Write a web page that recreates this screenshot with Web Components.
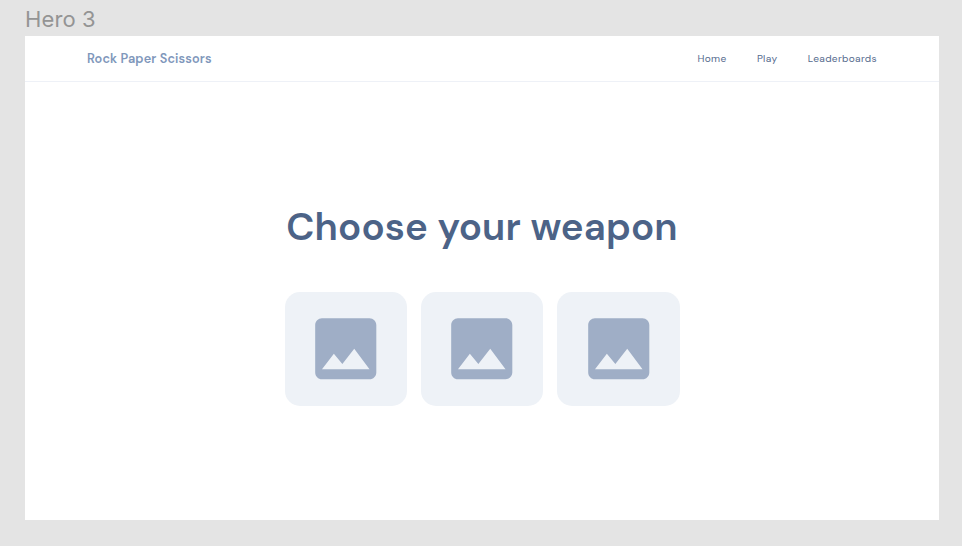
<!DOCTYPE html>
<html lang="en">
<head>
<meta charset="utf-8">
<title>Rock Paper Scissors</title>
<style>
html, body { margin: 0; height: 100%; background: #e4e4e4; overflow: hidden; }
body { font-family: "DM Sans", Inter, sans-serif; font-optical-sizing: none; font-variation-settings: "opsz" 14; }
</style>
</head>
<body>
<design-frame label="Hero 3">
  <site-header brand="Rock Paper Scissors">
    <nav-link>Home</nav-link>
    <nav-link>Play</nav-link>
    <nav-link>Leaderboards</nav-link>
  </site-header>
  <hero-section heading="Choose your weapon">
    <weapon-card></weapon-card>
    <weapon-card></weapon-card>
    <weapon-card></weapon-card>
  </hero-section>
</design-frame>
<script>
class Base extends HTMLElement {
  constructor() {
    super();
    this.attachShadow({ mode: 'open' }).innerHTML = this.constructor.markup;
  }
}

customElements.define('design-frame', class extends Base {
  static markup = `
    <style>
      :host { display: flex; flex-direction: column; box-sizing: border-box; height: 546px; width: 962px; padding: 0 23px 26px 25px; }
      .label { height: 36px; line-height: 39px; font-family: Inter, sans-serif; font-size: 22px; color: #949494; letter-spacing: .1px; white-space: nowrap; }
      .page { flex: 1; display: flex; flex-direction: column; background: #fff; }
    </style>
    <div class="label"></div>
    <div class="page"><slot></slot></div>`;
  connectedCallback() { this.shadowRoot.querySelector('.label').textContent = this.getAttribute('label'); }
});

customElements.define('site-header', class extends Base {
  static markup = `
    <style>
      :host { display: flex; align-items: center; justify-content: space-between; box-sizing: border-box; height: 46px; padding: 0 62px; border-bottom: 1px solid #eef1f7; }
      .brand { font-size: 12.7px; font-weight: 600; line-height: 16px; color: #8097bb; letter-spacing: .01em; white-space: nowrap; }
      nav { display: flex; gap: 30.3px; }
    </style>
    <div class="brand"></div>
    <nav><slot></slot></nav>`;
  connectedCallback() { this.shadowRoot.querySelector('.brand').textContent = this.getAttribute('brand'); }
});

customElements.define('nav-link', class extends Base {
  static markup = `
    <style>
      :host { display: block; font-size: 10.16px; line-height: 14px; color: #566b8e; letter-spacing: .033em; white-space: nowrap; }
    </style>
    <slot></slot>`;
});

customElements.define('hero-section', class extends Base {
  static markup = `
    <style>
      :host { flex: 1; display: flex; flex-direction: column; align-items: center; padding-top: 120px; }
      h1 { margin: 0; font-size: 38.5px; font-weight: 600; line-height: 50px; color: #4c6387; letter-spacing: .13px; white-space: nowrap; }
      .cards { display: flex; gap: 14px; margin-top: 40.4px; padding-left: .5px; }
    </style>
    <h1></h1>
    <div class="cards"><slot></slot></div>`;
  connectedCallback() { this.shadowRoot.querySelector('h1').textContent = this.getAttribute('heading'); }
});

customElements.define('weapon-card', class extends Base {
  static markup = `
    <style>
      :host { display: flex; align-items: center; justify-content: center; width: 122.4px; height: 113.6px; border-radius: 15px; background: #eef2f7; }
      svg { display: block; width: 81.5px; height: 81.5px; fill: #9faec6; }
    </style>
    <svg viewBox="0 0 24 24" aria-hidden="true"><path d="M21 19V5c0-1.1-.9-2-2-2H5c-1.1 0-2 .9-2 2v14c0 1.1.9 2 2 2h14c1.1 0 2-.9 2-2zM8.5 13.5l2.5 3.01L14.5 12l4.5 6H5l3.5-4.5z"/></svg>`;
});
</script>
</body>
</html>
